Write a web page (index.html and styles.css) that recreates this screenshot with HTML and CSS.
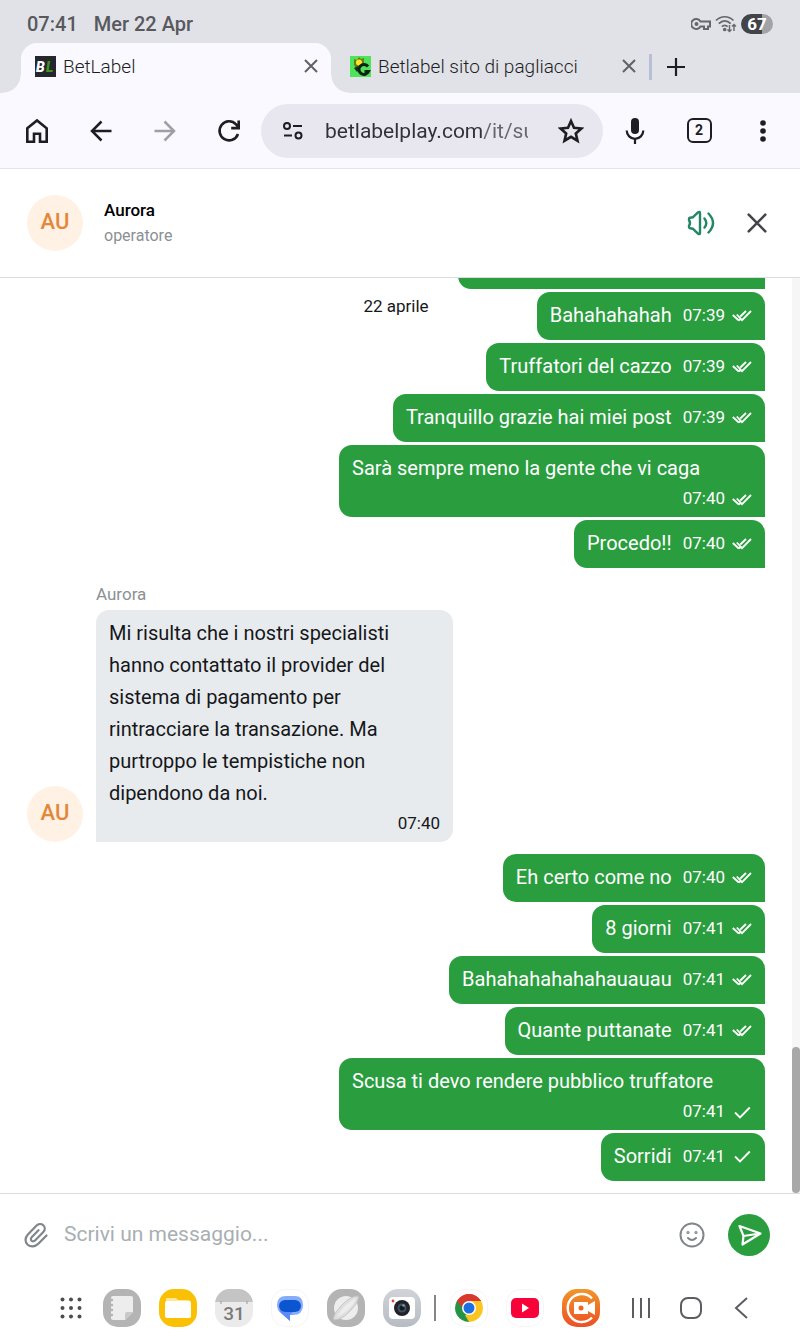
FILE: index.html
```html
<!DOCTYPE html>
<html lang="it">
<head>
    <meta charset="UTF-8">
    <meta name="viewport" content="width=device-width, initial-scale=1.0">
    <title>BetLabel</title>
    <link rel="stylesheet" href="styles.css">
</head>
<body>
    <!-- Shared message ticks -->
    <svg class="defs" aria-hidden="true">
        <symbol id="tick-one" viewBox="0 0 20 16">
            <path d="M3 8.500l5 5L17.800 3.500" fill="none" stroke="currentColor" stroke-width="1.800"/>
        </symbol>
        <symbol id="tick-two" viewBox="0 0 20 16">
            <path d="M.8 8l6 5.500M4.800 7.500l5.200 5.700L19 4M6.800 13.500l1.500-1.200M8.300 9.500L14 4" fill="none" stroke="currentColor" stroke-width="1.800"/>
        </symbol>
        <symbol id="cross" viewBox="0 0 24 24">
            <path d="M3 3l18 18M21 3L3 21" fill="none" stroke="currentColor" stroke-width="3"/>
        </symbol>
    </svg>

    <header class="browser">
        <div class="status">
            <span>07:41</span>
            <span>Mer 22 Apr</span>
            <div class="status-icons">
                <svg width="20" height="14" viewBox="0 0 20 14" fill="none" stroke="#66676b" stroke-width="2">
                    <path d="M9.500 4.500A5 5 0 1 0 9.500 9.500H13V12H17V9.500H19V4.500Z"/>
                    <circle cx="5.500" cy="7" r="1"/>
                </svg>
                <svg width="22" height="18" viewBox="0 0 22 18" fill="none" stroke="#66676b" stroke-width="1.700">
                    <path d="M1 5.500C6 .5 13.500.5 18.500 5.500M3.800 8.700C7.500 5 12 5 15.700 8.700M6.800 11.700C8.500 10 11 10 12.700 11.700"/>
                    <circle cx="9.700" cy="14.500" r="1" fill="#66676b"/>
                    <path d="M14.500 10v6.500M12.500 14.500l2 2 2-2M19 16V9.500M17 11.500l2-2 2 2" stroke-width="1.400"/>
                </svg>
                <span class="battery">67</span>
            </div>
        </div>

        <nav class="tabs">
            <div class="tab tab-active">
                <svg class="favicon" viewBox="0 0 21 21">
                    <rect width="21" height="21" fill="#25272d"/>
                    <text class="favicon-text" x="1" y="16" fill="#fff">B</text>
                    <text class="favicon-text" x="11" y="16" fill="#39961f">L</text>
                </svg>
                <a class="tab-title" href="#">BetLabel</a>
                <button class="tab-close" aria-label="Chiudi scheda"><svg width="16" height="16"><use href="#cross"/></svg></button>
            </div>
            <div class="tab">
                <svg class="favicon" viewBox="0 0 21 21">
                    <rect width="21" height="21" fill="#4fe35b"/>
                    <path d="M4 3l3 1 2-3 2 2 3-1v5l-2 4-5 2-3-4Z" fill="#6b7d12"/>
                    <circle cx="9" cy="6.500" r="3" fill="#ffe528"/>
                    <path d="M4 12l4-2 1 4-2 2Z" fill="#16331a"/>
                    <path d="M18 10.500a5 5 0 1 0 .5 5h-4" fill="none" stroke="#0b2310" stroke-width="3"/>
                </svg>
                <a class="tab-title" href="#">Betlabel sito di pagliacci</a>
                <button class="tab-close" aria-label="Chiudi scheda"><svg width="16" height="16"><use href="#cross"/></svg></button>
            </div>
            <button class="tab-new" aria-label="Nuova scheda">
                <svg width="20" height="20" viewBox="0 0 20 20" fill="none" stroke="#1d1d22" stroke-width="2.200"><path d="M10 1v18M1 10h18"/></svg>
            </button>
        </nav>

        <div class="toolbar">
            <button class="tool" aria-label="Home">
                <svg width="24" height="26" viewBox="0 0 24 26" fill="none" stroke="currentColor" stroke-width="2.600"><path d="M2.300 10.300L12 2.500l9.700 7.800v13.400H15v-8H9v8H2.300Z"/></svg>
            </button>
            <button class="tool" aria-label="Indietro">
                <svg width="24" height="24" viewBox="0 0 24 24" fill="none" stroke="currentColor" stroke-width="2.500"><path d="M22.500 12H3M12.500 2.500L3 12l9.500 9.500"/></svg>
            </button>
            <button class="tool tool-off" aria-label="Avanti">
                <svg width="24" height="24" viewBox="0 0 24 24" fill="none" stroke="currentColor" stroke-width="2.500"><path d="M1.500 12H21M11.500 2.500L21 12l-9.500 9.500"/></svg>
            </button>
            <button class="tool" aria-label="Ricarica">
                <svg width="24" height="24" viewBox="0 0 24 24" fill="none" stroke="currentColor" stroke-width="2.600"><path d="M21 15A9.500 9.500 0 1 1 19 5.300L21.500 8M21.700 1.500v7.600h-7.500"/></svg>
            </button>
            <div class="address">
                <svg width="22" height="18" viewBox="0 0 22 18" fill="none" stroke="#1d1d22" stroke-width="2"><circle cx="5" cy="4" r="3"/><path d="M11 4h9M2 13.500h8"/><circle cx="16.500" cy="13.500" r="3"/></svg>
                <input class="address-input" type="text" value="betlabelplay.com/it/su" aria-label="Indirizzo">
                <button class="star" aria-label="Preferiti">
                    <svg width="26" height="26" viewBox="0 0 26 26" fill="none" stroke="#1d1d22" stroke-width="2.600"><path d="M13 3l3 6.800 7.400.7-5.600 4.900 1.700 7.300-6.500-3.900-6.500 3.900 1.700-7.300-5.600-4.900 7.400-.7Z"/></svg>
                </button>
            </div>
            <button class="tool" aria-label="Ricerca vocale">
                <svg width="20" height="26" viewBox="0 0 20 26"><rect x="6" y="0" width="8" height="16" rx="4" fill="currentColor"/><path d="M1.700 12.500a8.300 8.300 0 0 0 16.600 0M10 21v5" fill="none" stroke="currentColor" stroke-width="2.200"/></svg>
            </button>
            <button class="tool" aria-label="Schede aperte"><span class="tab-count">2</span></button>
            <button class="tool" aria-label="Menu">
                <svg width="6" height="22" viewBox="0 0 6 22" fill="currentColor"><circle cx="3" cy="3" r="2.800"/><circle cx="3" cy="11" r="2.800"/><circle cx="3" cy="19" r="2.800"/></svg>
            </button>
        </div>
    </header>

    <section class="chat-head">
        <div class="avatar">AU</div>
        <div class="operator">
            <div class="operator-name">Aurora</div>
            <div class="operator-role">operatore</div>
        </div>
        <button class="head-button sound" aria-label="Audio">
            <svg width="28" height="26" viewBox="0 0 28 26" fill="none" stroke="currentColor" stroke-width="2.400" stroke-linecap="round" stroke-linejoin="round">
                <path d="M2 9q0-1 1-1.200l3-.6L11 2.300Q13 1.200 13 3v20q0 1.800-2 .7L6 18.800l-3-.6Q2 18 2 17V16Q4 13 2 10Z"/>
                <path d="M17.500 8.500q3.600 4.500 0 9M21.500 3.500q9 9.500 0 19"/>
            </svg>
        </button>
        <button class="head-button" aria-label="Chiudi">
            <svg width="20" height="20" viewBox="0 0 20 20" fill="none" stroke="#43454a" stroke-width="2.600" stroke-linecap="round"><path d="M1.700 1.700l16.600 16.600M18.300 1.700L1.700 18.300"/></svg>
        </button>
    </section>

    <main class="chat">
        <div class="date">22 aprile</div>
        <div class="messages">
            <div class="group">
                <div class="bubble bubble-cut"></div>
                <div class="bubble"><span>Bahahahahah</span><span class="meta">07:39 <svg class="tick"><use href="#tick-two"/></svg></span></div>
                <div class="bubble"><span>Truffatori del cazzo</span><span class="meta">07:39 <svg class="tick"><use href="#tick-two"/></svg></span></div>
                <div class="bubble"><span>Tranquillo grazie hai miei post</span><span class="meta">07:39 <svg class="tick"><use href="#tick-two"/></svg></span></div>
                <div class="bubble"><span>Sarà sempre meno la gente che vi caga</span><span class="meta">07:40 <svg class="tick"><use href="#tick-two"/></svg></span></div>
                <div class="bubble"><span>Procedo!!</span><span class="meta">07:40 <svg class="tick"><use href="#tick-two"/></svg></span></div>
            </div>

            <div class="incoming">
                <div class="avatar">AU</div>
                <div class="incoming-body">
                    <div class="sender">Aurora</div>
                    <div class="bubble bubble-in">
                        <span>Mi risulta che i nostri specialisti hanno contattato il provider del sistema di pagamento per rintracciare la transazione. Ma purtroppo le tempistiche non dipendono da noi.</span>
                        <span class="meta">07:40</span>
                    </div>
                </div>
            </div>

            <div class="group">
                <div class="bubble"><span>Eh certo come no</span><span class="meta">07:40 <svg class="tick"><use href="#tick-two"/></svg></span></div>
                <div class="bubble"><span>8 giorni</span><span class="meta">07:41 <svg class="tick"><use href="#tick-two"/></svg></span></div>
                <div class="bubble"><span>Bahahahahahahauauau</span><span class="meta">07:41 <svg class="tick"><use href="#tick-two"/></svg></span></div>
                <div class="bubble"><span>Quante puttanate</span><span class="meta">07:41 <svg class="tick"><use href="#tick-two"/></svg></span></div>
                <div class="bubble"><span>Scusa ti devo rendere pubblico truffatore</span><span class="meta">07:41 <svg class="tick"><use href="#tick-one"/></svg></span></div>
                <div class="bubble"><span>Sorridi</span><span class="meta">07:41 <svg class="tick"><use href="#tick-one"/></svg></span></div>
            </div>
        </div>
        <div class="scrollbar"><div class="scroll-thumb"></div></div>
    </main>

    <form class="composer">
        <button type="button" class="attach" aria-label="Allega">
            <svg width="24" height="26" viewBox="0 0 24 26" fill="none" stroke="currentColor" stroke-width="2.200" stroke-linecap="round"><path d="M22.500 13.500l-8.200 8.300c-3.200 3.200-7.700 3.500-10.600.9-3-2.700-2.800-7.200.2-10.300l8.400-8.600c2-2 5-2.300 7-.5 2 1.900 1.900 4.800 0 6.800l-8 8.200c-1.200 1.200-2.700 1.300-3.700.4-1-1-.9-2.500.3-3.700L14.500 8.200"/></svg>
        </button>
        <input class="message-input" type="text" placeholder="Scrivi un messaggio..." aria-label="Messaggio">
        <button type="button" class="emoji" aria-label="Emoji">
            <svg width="26" height="26" viewBox="0 0 26 26" fill="none" stroke="currentColor" stroke-width="2"><circle cx="13" cy="13" r="11.500"/><circle cx="9" cy="10.500" r=".6"/><circle cx="17" cy="10.500" r=".6"/><path d="M9 16q4 4 8 0" stroke-linecap="round"/></svg>
        </button>
        <button type="button" class="send" aria-label="Invia">
            <svg width="24" height="22" viewBox="0 0 24 22" fill="none" stroke="#fff" stroke-width="2.200" stroke-linejoin="round"><path d="M1.500 2L22.500 9.500 4.500 20.500 5.500 12Z M5.500 12L22 9.500M5.500 12L1.500 2"/></svg>
        </button>
    </form>

    <footer class="dock">
        <button class="app apps-all" aria-label="Tutte le app">
            <svg viewBox="0 0 38 38" fill="#4d4e52"><circle cx="10.500" cy="10.500" r="2"/><circle cx="19" cy="10.500" r="2"/><circle cx="27.500" cy="10.500" r="2"/><circle cx="10.500" cy="19" r="2"/><circle cx="19" cy="19" r="2"/><circle cx="27.500" cy="19" r="2"/><circle cx="10.500" cy="27.500" r="2"/><circle cx="19" cy="27.500" r="2"/><circle cx="27.500" cy="27.500" r="2"/></svg>
        </button>
        <div class="apps">
            <button class="app app-notes" aria-label="Note">
                <svg viewBox="0 0 38 38"><path d="M10 7h18q2 0 2 2v14l-8 8H10q-2 0-2-2V9q0-2 2-2Z" fill="#ededed"/><path d="M22 31v-6q0-2 2-2h6Z" fill="#c9c9c9"/><path d="M7 11h2M7 16h2M7 21h2M7 26h2" stroke="#b4b4b4" stroke-width="2.400" stroke-linecap="round"/></svg>
            </button>
            <button class="app app-files" aria-label="Archivio">
                <svg viewBox="0 0 38 38"><path d="M7 12V10q0-1 1-1h9l2 2h10q2 0 2 2v3H7Z" fill="#ffe896"/><rect x="6" y="12" width="26" height="17" rx="2" fill="#fff"/></svg>
            </button>
            <button class="app app-calendar" aria-label="Calendario">
                <svg viewBox="0 0 38 38"><path d="M0 0h38v13H0Z" fill="#c4c4c4"/><path d="M6 12v3M32 12v3" stroke="#999"/><text class="calendar-day" x="19" y="31" text-anchor="middle">31</text></svg>
            </button>
            <button class="app app-light" aria-label="Messaggi">
                <svg viewBox="0 0 38 38"><path d="M15 7h9q8 0 8 9 0 10-10 10h-3v6l-9-8Q6 21 6 16q0-9 9-9Z" fill="#86adfb"/><path d="M8 21q3 2 8 2h6l-3 3v6l-9-8Z" fill="#5b8cf5"/><rect x="8" y="11" width="22" height="12" rx="6" fill="#0b56d0"/></svg>
            </button>
            <button class="app app-internet" aria-label="Internet">
                <svg viewBox="0 0 38 38"><circle cx="19" cy="19" r="12" fill="#ededed"/><path d="M7 31Q5 27 14 17T31 7Q33 11 24 21T7 31Z" fill="#dedede" stroke="#c4c4c4"/><path d="M10 28Q17 15 29 9L27 14Q21 23 10 28Z" fill="#ededed"/></svg>
            </button>
            <button class="app app-camera" aria-label="Fotocamera">
                <svg viewBox="0 0 38 38"><rect x="6" y="8" width="26" height="22" rx="4" fill="#fff"/><circle cx="19" cy="19" r="8" fill="#202329"/><circle cx="19" cy="19" r="4.500" fill="#41535f"/><circle cx="19" cy="19" r="2.500" fill="#121a22"/><circle cx="20.500" cy="16.500" r="1.300" fill="#7b9bab"/><circle cx="10" cy="12" r="1.400" fill="#e1402e"/></svg>
            </button>
        </div>
        <div class="dock-line"></div>
        <div class="apps">
            <button class="app app-light" aria-label="Chrome">
                <svg viewBox="0 0 38 38"><path d="M19 19L6.900 12A14 14 0 0 1 31.100 12Z" fill="#d9382c"/><path d="M19 19L31.100 12A14 14 0 0 1 19 33Z" fill="#fbc520"/><path d="M19 19V33A14 14 0 0 1 6.900 12Z" fill="#269244"/><path d="M19 12h12.100L25 19Z" fill="#fbc520"/><path d="M13 22.500L6.900 12 17 12Z" fill="#269244"/><path d="M25 22.500L19 33l-4-7Z" fill="#fbc520"/><path d="M6.900 12A14 14 0 0 1 31.100 12H19q-5 0-7 6Z" fill="#d9382c"/><circle cx="19" cy="19" r="7" fill="#fff"/><circle cx="19" cy="19" r="5.500" fill="#1b6fe0"/></svg>
            </button>
            <button class="app app-light" aria-label="YouTube">
                <svg viewBox="0 0 38 38"><rect x="5" y="9" width="28" height="20" rx="5" fill="#f7033a"/><path d="M16 14.500v9l7-4.500Z" fill="#fff"/></svg>
            </button>
            <button class="app app-recorder" aria-label="Registratore">
                <svg viewBox="0 0 38 38"><path d="M30 9.500A14 14 0 1 0 30 28.500" fill="none" stroke="#fff" stroke-width="2.400"/><path d="M12 13h14v3l7-4v14l-7-4v3H12Z" fill="#fff"/><circle cx="19" cy="19" r="2.500" fill="#f26522"/></svg>
            </button>
        </div>
        <div class="nav-keys">
            <button class="nav-key" aria-label="Recenti"><svg width="20" height="20" viewBox="0 0 20 20" fill="none" stroke="currentColor" stroke-width="2"><path d="M2 0v20M10 0v20M18 0v20"/></svg></button>
            <button class="nav-key" aria-label="Home"><svg width="22" height="22" viewBox="0 0 22 22" fill="none" stroke="currentColor" stroke-width="2"><rect x="1" y="1" width="20" height="20" rx="7"/></svg></button>
            <button class="nav-key" aria-label="Indietro"><svg width="14" height="22" viewBox="0 0 14 22" fill="none" stroke="currentColor" stroke-width="2"><path d="M13 1L2 11l11 10"/></svg></button>
        </div>
    </footer>
</body>
</html>
```

FILE: styles.css
```css
* {
    box-sizing: border-box;
}
body {
    margin: 0;
    height: 100vh;
    display: flex;
    flex-direction: column;
    overflow: hidden;
    background: #fff;
    color: #15171a;
    font-family: Roboto, Arial, sans-serif;
    font-size: 20px;
}
button {
    display: flex;
    align-items: center;
    justify-content: center;
    padding: 0;
    border: none;
    background: none;
    color: inherit;
    font-family: inherit;
    cursor: pointer;
}
input {
    min-width: 0;
    padding: 0;
    border: none;
    outline: none;
    background: none;
    font-family: inherit;
    font-size: 21px;
}
svg {
    display: block;
    flex: none;
}
.defs {
    position: absolute;
    width: 0;
    height: 0;
}

/* Browser */
.browser {
    background: #e1e2e8;
    border-bottom: 1px solid #e3e3e8;
}
.status {
    display: flex;
    align-items: center;
    gap: 16px;
    height: 43px;
    padding: 4px 27px 0;
    color: #58595d;
    font-weight: 500;
}
.status-icons {
    display: flex;
    align-items: center;
    gap: 4px;
    margin-left: auto;
}
.battery {
    width: 32px;
    border-radius: 10px;
    background: linear-gradient(90deg, #434448 66%, #a2a3a7 66%);
    color: #fff;
    font-size: 17px;
    font-weight: 700;
    line-height: 20px;
    text-align: center;
}
.tabs {
    display: flex;
    align-items: center;
    height: 50px;
    padding-left: 21px;
}
.tab {
    position: relative;
    display: flex;
    align-items: center;
    gap: 7px;
    width: 310px;
    height: 50px;
    padding: 0 12px 4px 14px;
}
.tab + .tab {
    width: 318px;
    padding-left: 19px;
}
.tab-active {
    border-radius: 16px 16px 0 0;
    background: #faf9ff;
}
.tab-active::before,
.tab-active::after {
    content: "";
    position: absolute;
    bottom: 0;
    width: 18px;
    height: 18px;
}
.tab-active::before {
    right: 100%;
    background: radial-gradient(circle at 0 0, transparent 17px, #faf9ff 18px);
}
.tab-active::after {
    left: 100%;
    background: radial-gradient(circle at 100% 0, transparent 17px, #faf9ff 18px);
}
.favicon {
    width: 21px;
    height: 21px;
}
.favicon-text {
    font-size: 14px;
    font-style: italic;
    font-weight: 900;
}
.tab-title {
    flex: 1;
    color: #1d1d22;
    font-size: 19px;
    font-weight: 300;
    text-decoration: none;
    white-space: nowrap;
}
.tab-close {
    color: #606167;
}
.tab-new {
    height: 26px;
    padding: 0 14px;
    margin-bottom: 3px;
    border-left: 3px solid #b8bed6;
}
.toolbar {
    display: flex;
    align-items: center;
    height: 75px;
    padding: 0 5px;
    background: #faf9ff;
    color: #1d1d22;
}
.tool {
    width: 64px;
    height: 64px;
}
.tool-off {
    color: #a09fa6;
}
.address {
    display: flex;
    flex: 1;
    align-items: center;
    min-width: 0;
    height: 54px;
    padding: 0 19px 0 21px;
    border-radius: 27px;
    background: #e8e6ef;
}
.address-input {
    flex: 1;
    margin: 0 30px 0 21px;
    background: linear-gradient(90deg, #303037 157px, #66656c 157px);
    background-clip: text;
    color: transparent;
}
.tab-count {
    width: 25px;
    border: 2px solid #1d1d22;
    border-radius: 6px;
    font-size: 14px;
    font-weight: 700;
    line-height: 21px;
}

/* Chat header */
.chat-head {
    display: flex;
    align-items: center;
    height: 109px;
    padding: 0 15px 0 27px;
    border-bottom: 1px solid #dcdddf;
}
.avatar {
    flex: none;
    width: 56px;
    height: 56px;
    border-radius: 50%;
    background: #fff1e3;
    color: #e3873a;
    font-size: 22px;
    font-weight: 500;
    line-height: 54px;
    text-align: center;
}
.operator {
    flex: 1;
    margin-left: 21px;
    font-size: 16px;
    line-height: 26px;
}
.operator-name {
    color: #000;
    font-size: 17px;
    font-weight: 500;
}
.operator-role,
.sender {
    color: #8b9095;
}
.head-button {
    width: 56px;
    height: 56px;
}
.sound {
    color: #238763;
}

/* Messages */
.chat {
    position: relative;
    display: flex;
    flex: 1;
    min-height: 0;
}
.date {
    position: absolute;
    top: 16px;
    left: 0;
    right: 8px;
    font-size: 17px;
    line-height: 24px;
    text-align: center;
}
.messages {
    display: flex;
    flex: 1;
    flex-direction: column;
    justify-content: flex-end;
    overflow: hidden;
    padding: 0 27px 12px;
}
.group {
    display: flex;
    flex-direction: column;
    align-items: flex-end;
    gap: 3px;
}
.bubble {
    display: flex;
    flex-wrap: wrap;
    align-items: center;
    align-content: flex-start;
    column-gap: 11px;
    max-width: 426px;
    min-height: 48px;
    padding: 7px 13px 4px;
    border-radius: 13px 13px 0 13px;
    background: #2a9d3f;
    color: #fff;
    line-height: 32px;
}
.bubble-cut {
    width: 307px;
}
.bubble-in {
    max-width: 357px;
    border-radius: 13px 13px 13px 0;
    background: #e8ebee;
    color: #15171a;
}
.meta {
    display: flex;
    align-items: center;
    gap: 7px;
    margin-left: auto;
    font-size: 17px;
    line-height: 29px;
}
.tick {
    width: 20px;
    height: 16px;
}
.incoming {
    display: flex;
    align-items: flex-end;
    gap: 13px;
    margin: 14px 0 12px;
}
.sender {
    margin-bottom: 4px;
    font-size: 17px;
    line-height: 24px;
}
.scrollbar {
    display: flex;
    flex-direction: column;
    justify-content: flex-end;
    width: 8px;
    background: #f6f6f6;
}
.scroll-thumb {
    height: 16%;
    border-radius: 4px;
    background: #a8a8a8;
}

/* Composer */
.composer {
    display: flex;
    align-items: center;
    height: 83px;
    padding: 0 30px 0 24px;
    border-top: 1px solid #dcdddf;
    color: #81868c;
}
.message-input {
    flex: 1;
    height: 32px;
    margin: 0 16px 2px;
}
.message-input::placeholder {
    color: #a9aeb3;
}
.send {
    width: 42px;
    height: 42px;
    padding-left: 2px;
    margin-left: 23px;
    border-radius: 50%;
    background: #2a9d3f;
}

/* Dock */
.dock {
    display: flex;
    align-items: center;
    justify-content: center;
    height: 64px;
    padding-left: 18px;
}
.apps {
    display: flex;
    gap: 18px;
}
.app {
    width: 38px;
    height: 38px;
    border-radius: 15px;
    overflow: hidden;
}
.app svg {
    width: 38px;
    height: 38px;
}
.apps-all {
    margin-right: 13px;
}
.app-notes,
.app-internet {
    background: #b4b4b4;
}
.app-files {
    background: #fac004;
}
.app-calendar {
    background: #ebebeb;
}
.calendar-day {
    fill: #7a7a7a;
    font-size: 19px;
    font-weight: 500;
}
.app-light {
    background: #fff;
    box-shadow: inset 0 0 0 1px #f5f5f7;
}
.app-camera {
    background: linear-gradient(#d0d4d9, #b7bcc3);
}
.app-recorder {
    background: linear-gradient(#f0962a, #ee4f24);
}
.dock-line {
    width: 2px;
    height: 26px;
    margin: 0 14px 0 13px;
    background: #85868a;
}
.nav-keys {
    display: flex;
    margin-left: 16px;
    color: #5c5d61;
}
.nav-key {
    width: 50px;
    height: 50px;
}
```
